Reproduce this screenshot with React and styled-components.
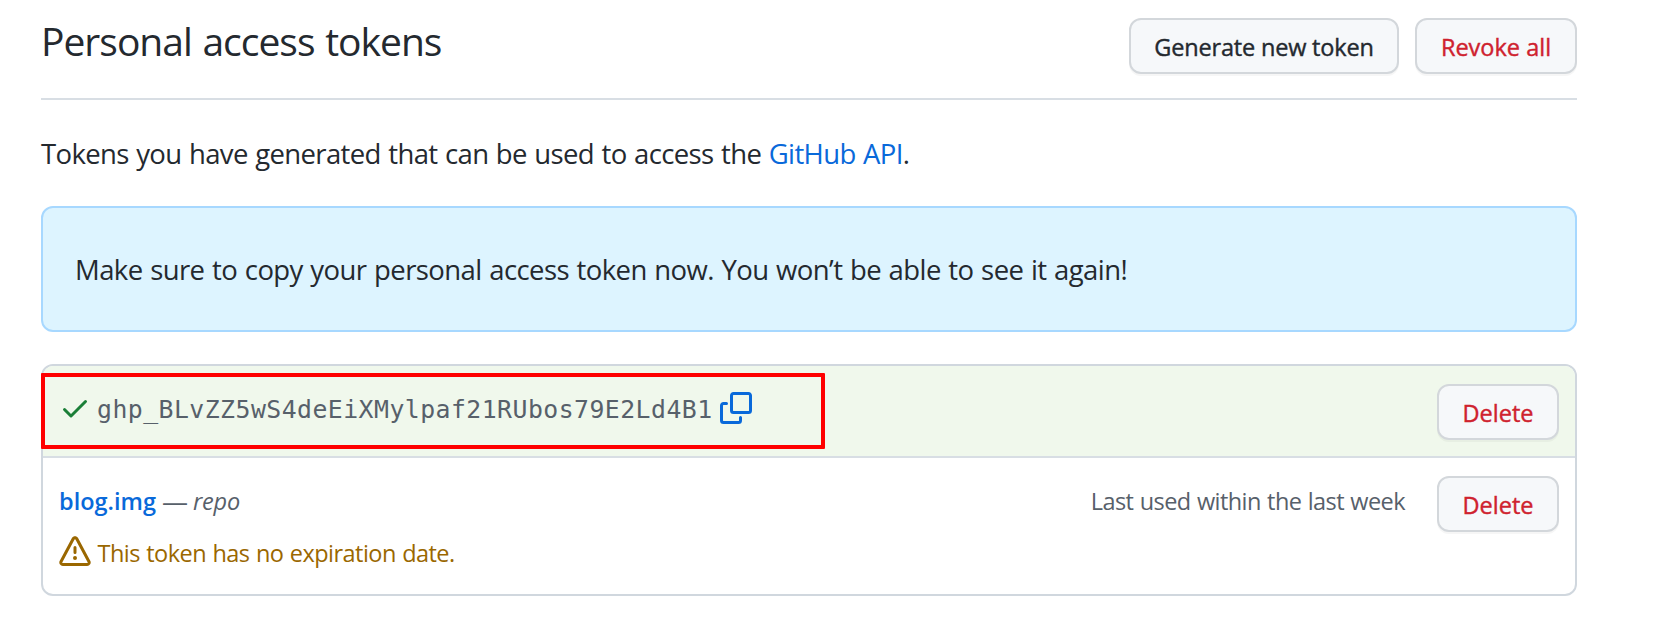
import React from "react";
import styled, { createGlobalStyle } from "styled-components";

const GlobalStyle = createGlobalStyle`
  *, *::before, *::after { box-sizing: border-box; }
  body {
    margin: 0;
    background: #ffffff;
    color: #24292f;
    font-family: "Open Sans", "Noto Sans", sans-serif;
    font-size: 27.5px;
    line-height: 42px;
  }
`;

const Page = styled.main`
  width: 1536px;
  margin-left: 41px;
  padding-top: 18px;
`;

const Header = styled.header`
  display: flex;
  align-items: flex-start;
  justify-content: space-between;
  height: 82px;
  border-bottom: 2px solid #d8dee4;
`;

const Title = styled.h2`
  margin: -7px 0 0;
  font-size: 39px;
  font-weight: 400;
  line-height: 60px;
  letter-spacing: -1px;
  word-spacing: 1.5px;
  white-space: nowrap;
`;

const Actions = styled.div`
  display: flex;
  gap: 16px;
`;

const Button = styled.button`
  flex: none;
  width: ${(p) => p.$width}px;
  height: 56px;
  padding: 2px 0 0;
  border: 2px solid #d3d7db;
  border-radius: 12px;
  background: #f6f8fa;
  box-shadow: 0 2px 0 rgba(27, 31, 36, 0.04);
  color: ${(p) => (p.$danger ? "#cf222e" : "#24292f")};
  font: 500 23.5px/40px "Open Sans", "Noto Sans", sans-serif;
  -webkit-text-stroke: 0.4px currentColor;
  letter-spacing: ${(p) => p.$spacing || 0}px;
  white-space: nowrap;
`;

const Intro = styled.p`
  margin: 33px 0 0;
  letter-spacing: -0.64px;
  word-spacing: 1px;
  white-space: nowrap;
`;

const Link = styled.a`
  color: #0969da;
  text-decoration: none;
`;

const Flash = styled.div`
  height: 126px;
  margin-top: 31px;
  padding: 41px 32px 0;
  border: 2px solid #a7d8ff;
  border-radius: 12px;
  background: #ddf4ff;
  letter-spacing: -0.58px;
  word-spacing: 1px;
  white-space: nowrap;
`;

const TokenList = styled.section`
  position: relative;
  height: 232px;
  margin-top: 32px;
  border: 2px solid #d0d7de;
  border-radius: 12px;
`;

const TokenRow = styled.div`
  display: flex;
  justify-content: space-between;
  padding: 18px 16px 0;
  height: ${(p) => (p.$fresh ? 92 : 136)}px;
  background: ${(p) => (p.$fresh ? "#f0f8ec" : "transparent")};
  border-bottom: ${(p) => (p.$fresh ? "2px solid #d8dee4" : "none")};
  border-radius: ${(p) => (p.$fresh ? "10px 10px 0 0" : "0")};
`;

const TokenValue = styled.div`
  display: flex;
  align-items: flex-start;
  padding-top: 8px;
`;

const Code = styled.code`
  width: 615px;
  margin: 1px 8px 0 6px;
  color: #57606a;
  font: 24.8px/33px "DejaVu Sans Mono", monospace;
  letter-spacing: 0.46px;
`;

const Icon = styled.svg`
  display: block;
  flex: none;
  width: 32px;
  height: 32px;
  fill: ${(p) => p.$color};
`;

const Details = styled.div`
  padding-top: 7px;
  font-size: 23.5px;
  line-height: 36px;
  white-space: nowrap;
`;

const NameLine = styled.div`
  display: flex;
  color: #57606a;
`;

const Name = styled(Link)`
  font-weight: 600;
`;

const Dash = styled.span`
  margin: 0 5px 0 6px;
  font-size: 26px;
`;

const Scope = styled.em`
  letter-spacing: -0.2px;
`;

const Warning = styled.div`
  display: flex;
  gap: 6.5px;
  margin-top: 16px;
  color: #9a6700;
  letter-spacing: -0.53px;
  word-spacing: 0.8px;
`;

const WarningText = styled.span`
  margin-top: 0;
`;

const WarningIcon = styled.span`
  padding-top: 1px;
`;

const Usage = styled.div`
  display: flex;
  gap: 32px;
`;

const LastUsed = styled.span`
  padding-top: 7px;
  color: #57606a;
  font-size: 23.5px;
  line-height: 36px;
  letter-spacing: -0.57px;
  word-spacing: 0.8px;
  white-space: nowrap;
`;

const Highlight = styled.div`
  position: absolute;
  top: 7px;
  left: -2px;
  width: 784px;
  height: 76px;
  border: 4px solid #ff0000;
  border-radius: 1px;
  pointer-events: none;
`;

const CheckIcon = () => (
  <Icon viewBox="0 0 16 16" $color="#1a7f37">
    <path d="M13.78 4.22a.75.75 0 010 1.06l-7.25 7.25a.75.75 0 01-1.06 0L2.22 9.28a.75.75 0 011.06-1.06L6 10.94l6.72-6.72a.75.75 0 011.06 0z" />
  </Icon>
);

const CopyIcon = () => (
  <Icon viewBox="0 0 16 16" $color="#0969da">
    <path d="M0 6.75C0 5.784.784 5 1.75 5h1.5a.75.75 0 010 1.5h-1.5a.25.25 0 00-.25.25v7.5c0 .138.112.25.25.25h7.5a.25.25 0 00.25-.25v-1.5a.75.75 0 011.5 0v1.5A1.75 1.75 0 019.25 16h-7.5A1.75 1.75 0 010 14.25v-7.5z" />
    <path d="M5 1.75C5 .784 5.784 0 6.75 0h7.5C15.216 0 16 .784 16 1.75v7.5A1.75 1.75 0 0114.25 11h-7.5A1.75 1.75 0 015 9.25v-7.5zm1.75-.25a.25.25 0 00-.25.25v7.5c0 .138.112.25.25.25h7.5a.25.25 0 00.25-.25v-7.5a.25.25 0 00-.25-.25h-7.5z" />
  </Icon>
);

const AlertIcon = () => (
  <Icon viewBox="0 0 16 16" $color="#9a6700">
    <path d="M8.22 1.754a.25.25 0 00-.44 0L1.698 13.132a.25.25 0 00.22.368h12.164a.25.25 0 00.22-.368L8.22 1.754zm-1.763-.707c.659-1.234 2.427-1.234 3.086 0l6.082 11.378A1.75 1.75 0 0114.082 15H1.918a1.75 1.75 0 01-1.543-2.575L6.457 1.047zM9 11a1 1 0 11-2 0 1 1 0 012 0zm-.25-5.25a.75.75 0 00-1.5 0v2.5a.75.75 0 001.5 0v-2.5z" />
  </Icon>
);

export default function App() {
  return (
    <>
      <GlobalStyle />
      <Page>
        <Header>
          <Title>Personal access tokens</Title>
          <Actions>
            <Button $width={270} $spacing={-0.18}>Generate new token</Button>
            <Button $width={162} $danger>Revoke all</Button>
          </Actions>
        </Header>
        <Intro>
          Tokens you have generated that can be used to access the <Link>GitHub API</Link>.
        </Intro>
        <Flash>Make sure to copy your personal access token now. You won’t be able to see it again!</Flash>
        <TokenList>
          <TokenRow $fresh>
            <TokenValue>
              <CheckIcon />
              <Code>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</Code>
              <CopyIcon />
            </TokenValue>
            <Button $width={122} $danger>Delete</Button>
          </TokenRow>
          <TokenRow>
            <Details>
              <NameLine>
                <Name>blog.img</Name>
                <Dash>—</Dash>
                <Scope>repo</Scope>
              </NameLine>
              <Warning>
                <WarningIcon>
                  <AlertIcon />
                </WarningIcon>
                <WarningText>This token has no expiration date.</WarningText>
              </Warning>
            </Details>
            <Usage>
              <LastUsed>Last used within the last week</LastUsed>
              <Button $width={122} $danger>Delete</Button>
            </Usage>
          </TokenRow>
          <Highlight />
        </TokenList>
      </Page>
    </>
  );
}
